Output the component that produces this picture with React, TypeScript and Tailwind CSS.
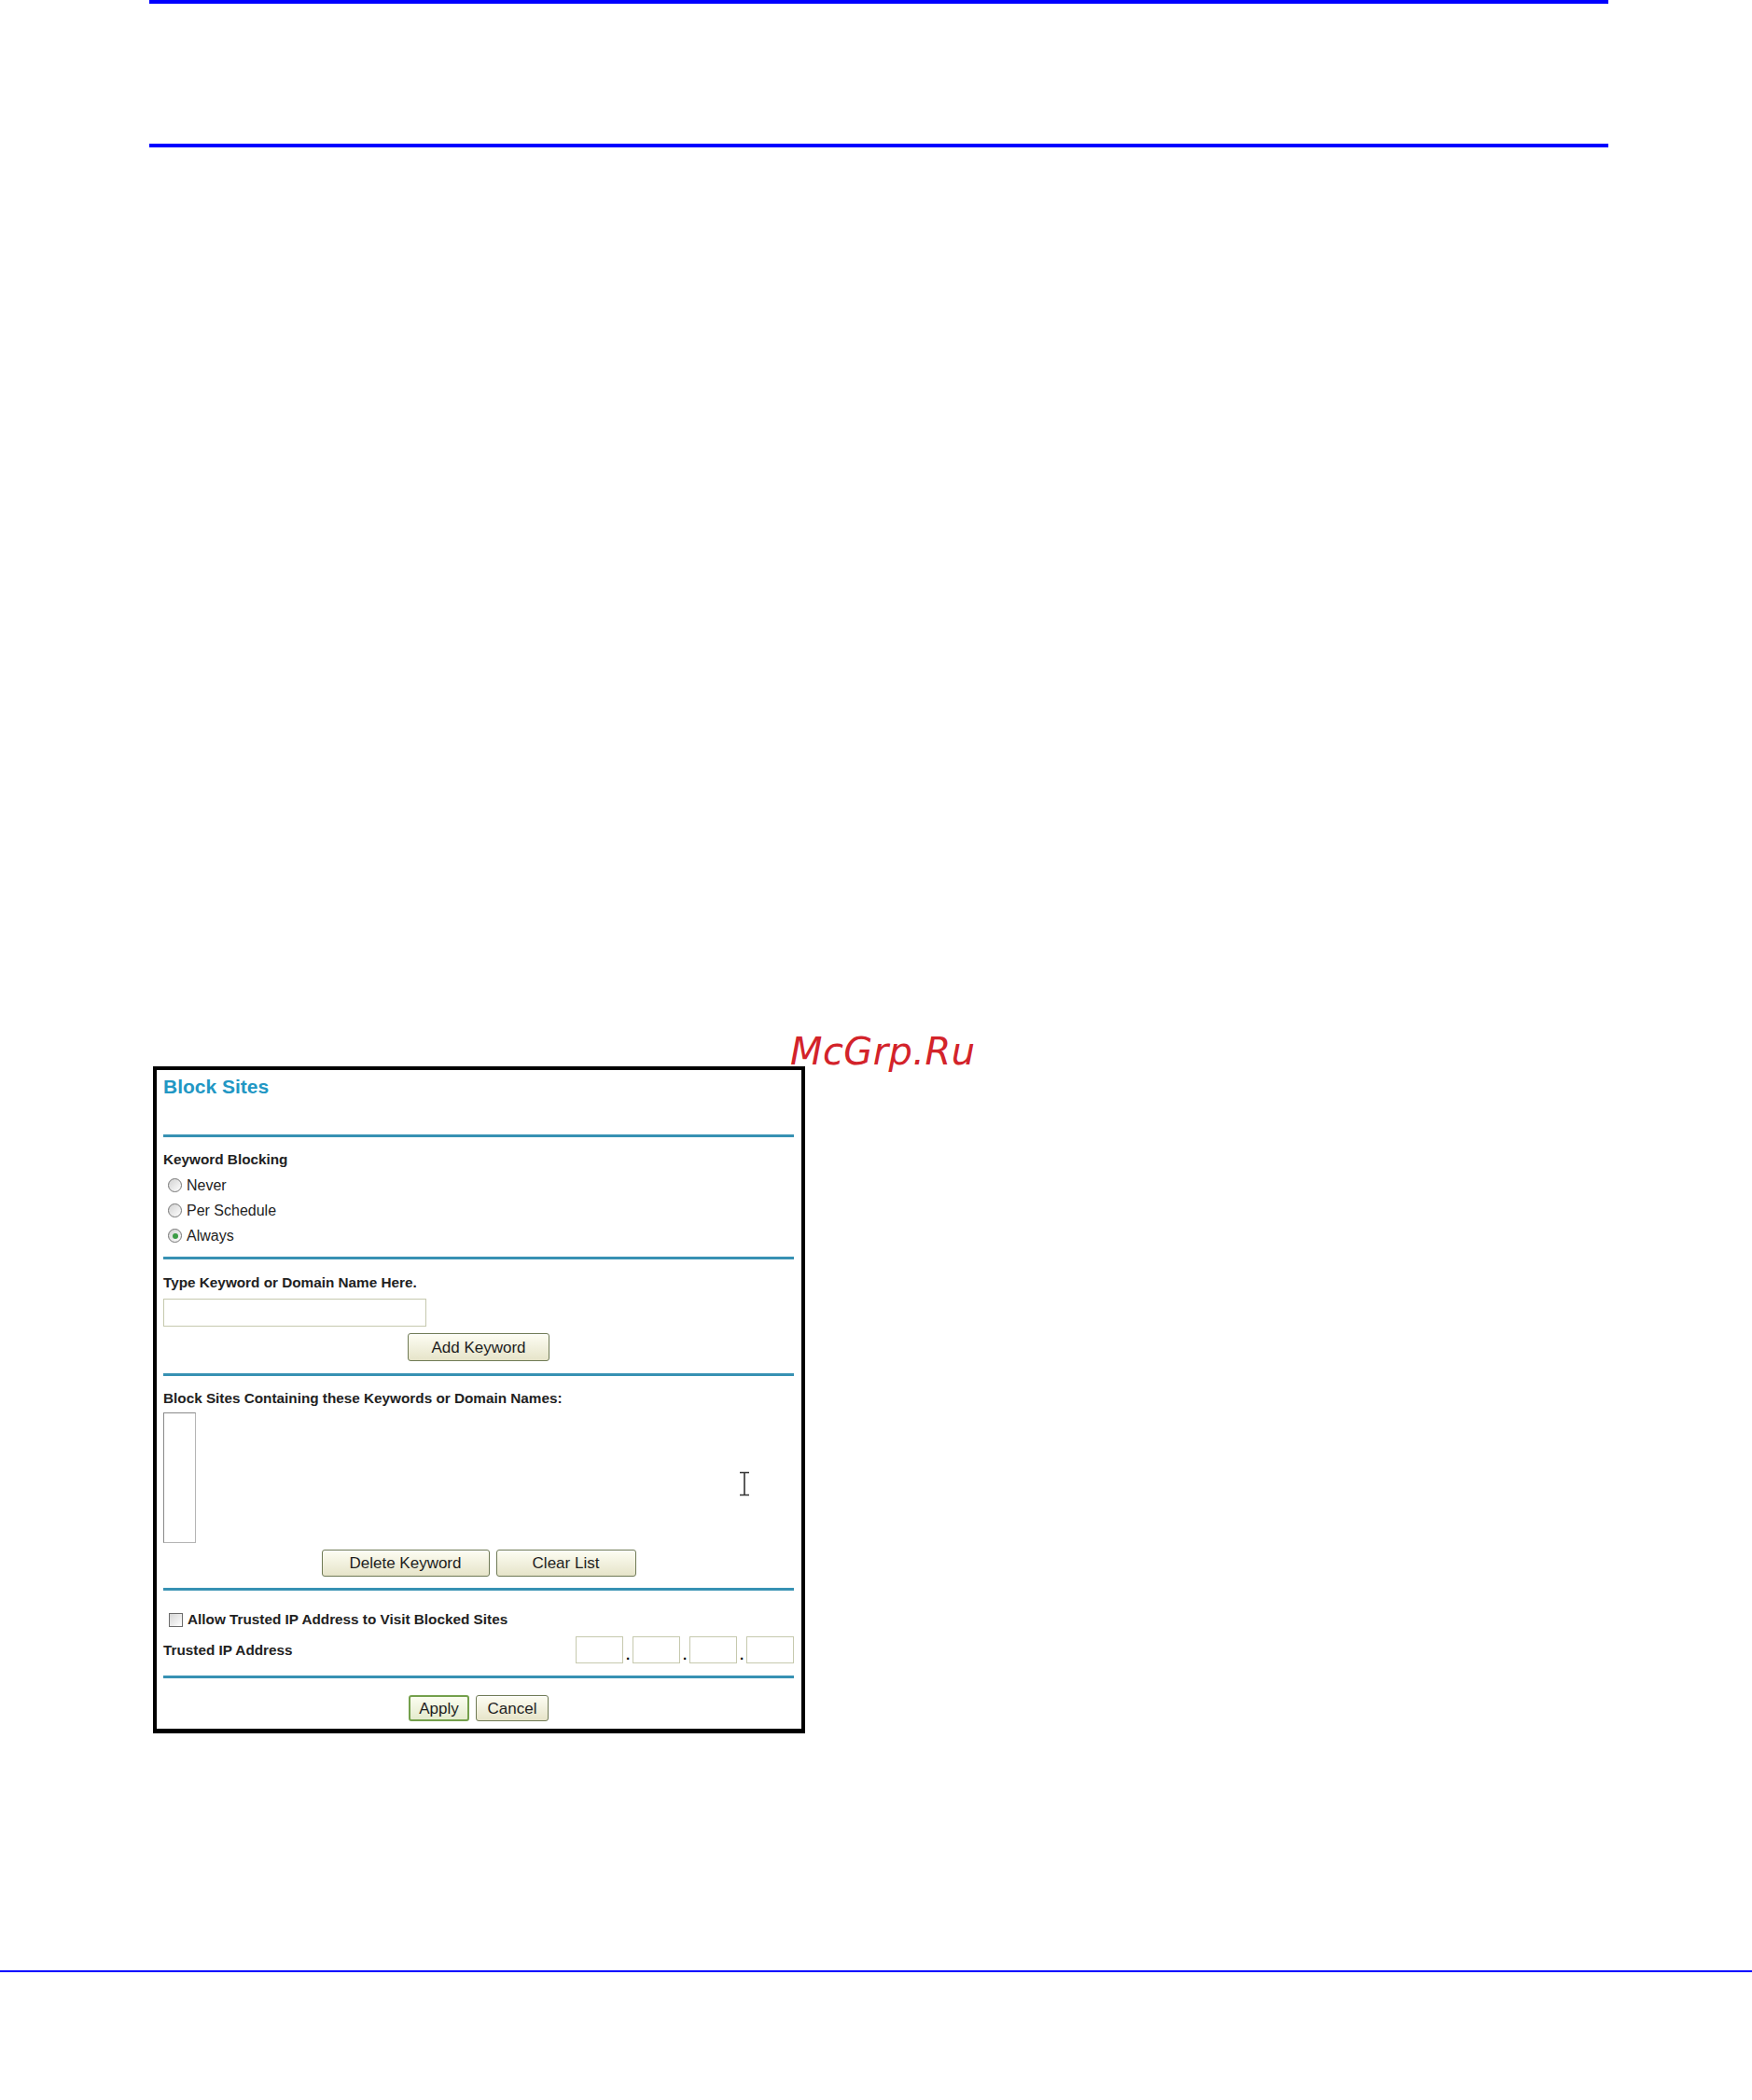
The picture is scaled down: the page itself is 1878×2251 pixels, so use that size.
import React from "react";

const btn =
  "h-full rounded-[3px] border border-[#6f7a55] bg-gradient-to-b from-[#fdfdf3] to-[#e6e4c9] text-[17px] leading-none text-[#1e1e1e] shadow-[inset_0_1px_0_#ffffff]";

function Radio({ label, checked }: { label: string; checked?: boolean }) {
  return (
    <div className="flex h-[27px] items-center">
      <span className="ml-[5px] flex h-[15px] w-[15px] items-center justify-center rounded-full border border-[#747474] bg-gradient-to-br from-[#d2d2d2] to-[#ffffff]">
        {checked && <span className="h-[6px] w-[6px] rounded-full bg-[#3c9c46]" />}
      </span>
      <span className="ml-[5px] text-[16px] leading-[27px] text-[#232323]">{label}</span>
    </div>
  );
}

function Divider({ className }: { className: string }) {
  return <div className={"h-[3px] w-full bg-[#3791b3] " + className} />;
}

const label = "text-[15.3px] font-bold leading-[18px] text-[#222]";

export default function App() {
  return (
    <div
      className="relative h-[2251px] w-full overflow-hidden bg-white"
      style={{ fontFamily: '"Liberation Sans", Arial, sans-serif' }}
    >
      <div className="ml-[160px] h-[4px] w-[1564px] bg-[#0000ff]" />
      <div className="ml-[160px] mt-[150px] h-[4px] w-[1564px] bg-[#0000ff]" />

      <div className="ml-[164px] mt-[985px] w-[699px] border-[4px] border-b-[5px] border-black bg-white pl-[7px] pr-[8px] pb-[8px]">
        <div className="mt-[6px] h-[24px] text-[21px] font-bold leading-[24px] text-[#2297c4]">
          Block Sites
        </div>
        <Divider className="mt-[39px]" />
        <div className={"mt-[15px] " + label}>Keyword Blocking</div>
        <div className="mt-[5px]">
          <Radio label="Never" />
          <Radio label="Per Schedule" />
          <Radio label="Always" checked />
        </div>
        <Divider className="mt-[9px]" />
        <div className={"mt-[16px] " + label}>Type Keyword or Domain Name Here.</div>
        <div className="mt-[8px] h-[30px] w-[282px] border border-[#c6c9ae] bg-white" />
        <div className="mt-[7px] flex h-[30px] justify-center">
          <button className={btn + " w-[152px]"}>Add Keyword</button>
        </div>
        <Divider className="mt-[13px]" />
        <div className={"mt-[15px] " + label}>Block Sites Containing these Keywords or Domain Names:</div>
        <div className="mt-[6px] h-[140px] w-[35px] border border-[#b4b4b4] border-l-[#8a8a8a] border-t-[#8a8a8a] bg-white" />
        <div className="mt-[7px] flex h-[29px] justify-center gap-[7px]">
          <button className={btn + " w-[180px]"}>Delete Keyword</button>
          <button className={btn + " w-[150px]"}>Clear List</button>
        </div>
        <Divider className="mt-[12px]" />
        <div className="mt-[21px] flex h-[20px] items-center">
          <span className="ml-[6px] h-[15px] w-[15px] border border-[#6c6c6c] bg-gradient-to-br from-[#d6d6d6] to-[#ffffff]" />
          <span className="ml-[5px] text-[15.3px] font-bold leading-[20px] text-[#222]">
            Allow Trusted IP Address to Visit Blocked Sites
          </span>
        </div>
        <div className="mt-[8px] flex h-[29px] items-center justify-between">
          <span className={label}>Trusted IP Address</span>
          <div className="flex h-full items-stretch">
            <div className="w-[51px] border border-[#c6c9ae] bg-white" />
            <div className="flex w-[10px] items-end justify-center pb-[2px] text-[15px] font-bold leading-none text-black">.</div>
            <div className="w-[51px] border border-[#c6c9ae] bg-white" />
            <div className="flex w-[10px] items-end justify-center pb-[2px] text-[15px] font-bold leading-none text-black">.</div>
            <div className="w-[51px] border border-[#c6c9ae] bg-white" />
            <div className="flex w-[10px] items-end justify-center pb-[2px] text-[15px] font-bold leading-none text-black">.</div>
            <div className="w-[51px] border border-[#c6c9ae] bg-white" />
          </div>
        </div>
        <Divider className="mt-[13px]" />
        <div className="mt-[18px] flex h-[28px] justify-center gap-[7px]">
          <button className="h-full w-[65px] rounded-[3px] border-2 border-[#74a04c] bg-gradient-to-b from-[#fbfdf0] to-[#e4ebcd] text-[17px] leading-none text-[#1e1e1e]">
            Apply
          </button>
          <button className={btn + " w-[78px]"}>Cancel</button>
        </div>
      </div>

      <div className="mt-[254px] h-[2px] w-full bg-[#0000ff]" />

      <div
        className="absolute left-[847px] top-[1107px] text-[40px] italic leading-[40px] tracking-[0.4px] text-[#d3232a]"
        style={{ fontFamily: '"DejaVu Sans", sans-serif' }}
      >
        McGrp.Ru
      </div>

      <svg className="absolute left-[792px] top-[1577px]" width="12" height="27" viewBox="0 0 12 27">
        <path d="M1 1.5h4M7 1.5h4M6 2v23M1 25.5h4M7 25.5h4M4 1.5h4M4 25.5h4" stroke="#333" strokeWidth="1.6" fill="none" />
      </svg>
    </div>
  );
}
